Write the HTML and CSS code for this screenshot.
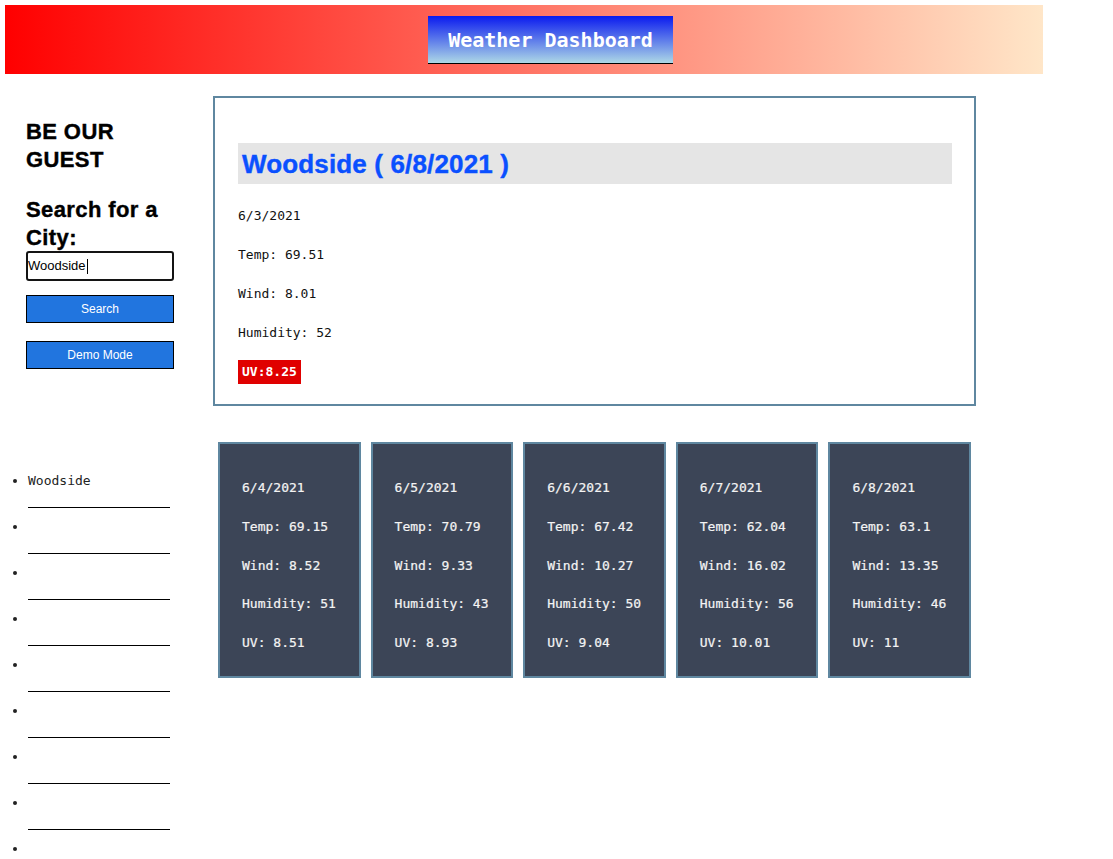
FILE: index.html
```html
<!DOCTYPE html>
<html lang="en">
<head>
<meta charset="utf-8">
<title>Weather Dashboard</title>
<link rel="stylesheet" href="styles.css">
</head>
<body>
<header class="topbar">
  <h1 class="title">Weather Dashboard</h1>
</header>
<div class="layout">
  <aside class="sidebar">
    <h2 class="side-heading">BE OUR GUEST</h2>
    <h2 class="side-heading search-heading">Search for a City:</h2>
    <div class="search-input">Woodside<span class="caret"></span></div>
    <button class="btn btn-search" type="button">Search</button>
    <button class="btn btn-demo" type="button">Demo Mode</button>
  </aside>
  <section class="current">
    <h2 class="city-title">Woodside ( 6/8/2021 )</h2>
    <p class="line first-line">6/3/2021</p>
    <p class="line">Temp: 69.51</p>
    <p class="line">Wind: 8.01</p>
    <p class="line">Humidity: 52</p>
    <p class="line"><span class="uv-badge">UV:8.25</span></p>
  </section>
  <ul class="history">
    <li>Woodside</li>
    <li>&nbsp;</li>
    <li>&nbsp;</li>
    <li>&nbsp;</li>
    <li>&nbsp;</li>
    <li>&nbsp;</li>
    <li>&nbsp;</li>
    <li>&nbsp;</li>
    <li>&nbsp;</li>
    <li>&nbsp;</li>
  </ul>
  <section class="forecast">
    <div class="day">
      <p class="fline">6/4/2021</p>
      <p class="fline">Temp: 69.15</p>
      <p class="fline">Wind: 8.52</p>
      <p class="fline">Humidity: 51</p>
      <p class="fline">UV: 8.51</p>
    </div>
    <div class="day">
      <p class="fline">6/5/2021</p>
      <p class="fline">Temp: 70.79</p>
      <p class="fline">Wind: 9.33</p>
      <p class="fline">Humidity: 43</p>
      <p class="fline">UV: 8.93</p>
    </div>
    <div class="day">
      <p class="fline">6/6/2021</p>
      <p class="fline">Temp: 67.42</p>
      <p class="fline">Wind: 10.27</p>
      <p class="fline">Humidity: 50</p>
      <p class="fline">UV: 9.04</p>
    </div>
    <div class="day">
      <p class="fline">6/7/2021</p>
      <p class="fline">Temp: 62.04</p>
      <p class="fline">Wind: 16.02</p>
      <p class="fline">Humidity: 56</p>
      <p class="fline">UV: 10.01</p>
    </div>
    <div class="day">
      <p class="fline">6/8/2021</p>
      <p class="fline">Temp: 63.1</p>
      <p class="fline">Wind: 13.35</p>
      <p class="fline">Humidity: 46</p>
      <p class="fline">UV: 11</p>
    </div>
  </section>
</div>
</body>
</html>
```
FILE: styles.css
```css
* { box-sizing: border-box; }

body {
  margin: 5px;
  background: #ffffff;
  font-family: "DejaVu Sans Mono", "Liberation Mono", monospace;
  font-size: 13px;
  color: #111;
}

.topbar {
  width: 1038px;
  height: 69px;
  display: flex;
  justify-content: center;
  align-items: flex-start;
  padding-left: 53px;
  padding-top: 11px;
  background: linear-gradient(to right, #ff0000 0%, #ffe6c8 100%);
}

.title {
  margin: 0;
  padding: 12px 20px 11px;
  font-family: "DejaVu Sans Mono", monospace;
  font-size: 20px;
  line-height: 24px;
  font-weight: bold;
  color: #ffffff;
  background: linear-gradient(to bottom, #0a1aef 0%, #add8e6 100%);
  border-bottom: 1px solid #000;
}

.layout {
  display: grid;
  grid-template-columns: 208px 763px;
  row-gap: 36px;
  margin-top: 22px;
}

.sidebar {
  padding: 22px 0 0 21px;
  width: 169px;
  display: flex;
  flex-direction: column;
}

.side-heading {
  margin: 0;
  font-family: "Liberation Sans", Arial, sans-serif;
  font-size: 22px;
  line-height: 28px;
  font-weight: bold;
  letter-spacing: 0.4px;
  -webkit-text-stroke: 0.4px #000;
  color: #000;
}

.search-heading {
  margin-top: 22px;
}

.search-input {
  width: 148px;
  height: 30px;
  margin-top: -1px;
  border: 2px solid #141414;
  border-radius: 3px;
  padding: 0;
  font-family: "Liberation Sans", Arial, sans-serif;
  font-size: 13px;
  line-height: 26px;
  color: #000;
  display: flex;
  align-items: center;
}

.caret {
  display: inline-block;
  width: 1px;
  height: 15px;
  background: #000;
  margin-left: 1px;
}

.btn {
  width: 148px;
  height: 28px;
  border: 1px solid #000;
  background: #2175df;
  color: #fff;
  font-family: "Liberation Sans", Arial, sans-serif;
  font-size: 12px;
  padding: 0;
  text-align: center;
}

.btn-search { margin-top: 14px; }
.btn-demo { margin-top: 18px; }

.current {
  border: 2px solid #5f87a0;
  padding: 45px 22px 24px 23px;
}

.city-title {
  margin: 0;
  background: #e5e5e5;
  color: #0a50ff;
  font-family: "Liberation Sans", Arial, sans-serif;
  font-size: 26px;
  line-height: 30px;
  font-weight: bold;
  letter-spacing: 0.15px;
  -webkit-text-stroke: 0.4px #0a50ff;
  padding: 6px 4px 5px;
}

.line {
  margin: 23px 0 0;
  line-height: 16px;
  color: #111;
}

.first-line {
  margin-top: 24px;
}

.uv-badge {
  background: #e00000;
  color: #fff;
  font-weight: bold;
  padding: 4px 4px 5px;
}

.history {
  margin: 0;
  padding: 31px 0 0 23px;
  width: 165px;
  color: #222;
}

.history li {
  line-height: 16px;
  padding-bottom: 18px;
  border-bottom: 1px solid #000;
  margin-bottom: 11px;
}

.forecast {
  display: flex;
}

.day {
  flex: 1;
  margin: 0 5px;
  height: 236px;
  background: #3c4557;
  border: 2px solid #5f87a0;
  padding: 13.25px 10px 0 22px;
}

.fline {
  margin: 22.75px 0 0;
  line-height: 16px;
  color: #f4f4f4;
  -webkit-text-stroke: 0.2px #f4f4f4;
}
```
